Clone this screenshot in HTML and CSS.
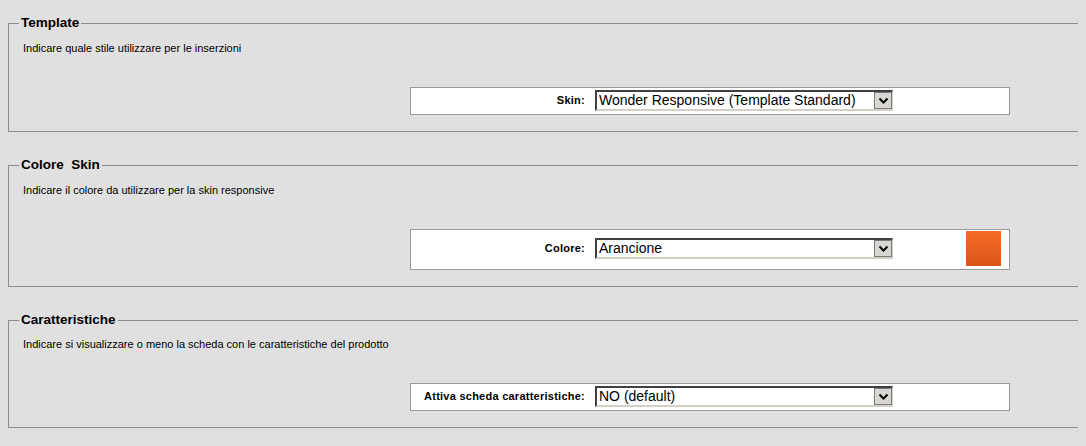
FILE: index.html
```html
<!DOCTYPE html>
<html lang="it">
<head>
<meta charset="utf-8">
<title>Impostazioni</title>
<link rel="stylesheet" href="styles.css">
</head>
<body>
<fieldset class="section">
  <legend class="section-title">Template</legend>
  <p class="section-desc">Indicare quale stile utilizzare per le inserzioni</p>
  <div class="field-box">
    <label class="field-label">Skin:</label>
    <span class="select-wrap">
      <select class="field-select"><option>Wonder Responsive (Template Standard)</option></select>
      <span class="select-arrow"><svg width="15" height="15" viewBox="0 0 15 15"><polyline points="3.5,5.5 7.5,9.5 11.5,5.5" fill="none" stroke="#000" stroke-width="2"/></svg></span>
    </span>
    <span class="field-extra"></span>
  </div>
</fieldset>

<fieldset class="section">
  <legend class="section-title">Colore&nbsp; Skin</legend>
  <p class="section-desc">Indicare il colore da utilizzare per la skin responsive</p>
  <div class="field-box field-box-tall">
    <label class="field-label">Colore:</label>
    <span class="select-wrap">
      <select class="field-select"><option>Arancione</option></select>
      <span class="select-arrow"><svg width="15" height="15" viewBox="0 0 15 15"><polyline points="3.5,5.5 7.5,9.5 11.5,5.5" fill="none" stroke="#000" stroke-width="2"/></svg></span>
    </span>
    <span class="field-extra"><span class="swatch"></span></span>
  </div>
</fieldset>

<fieldset class="section section-compact">
  <legend class="section-title">Caratteristiche</legend>
  <p class="section-desc">Indicare si visualizzare o meno la scheda con le caratteristiche del prodotto</p>
  <div class="field-box">
    <label class="field-label">Attiva scheda caratteristiche:</label>
    <span class="select-wrap">
      <select class="field-select"><option>NO (default)</option></select>
      <span class="select-arrow"><svg width="15" height="15" viewBox="0 0 15 15"><polyline points="3.5,5.5 7.5,9.5 11.5,5.5" fill="none" stroke="#000" stroke-width="2"/></svg></span>
    </span>
    <span class="field-extra"></span>
  </div>
</fieldset>
</body>
</html>
```

FILE: styles.css
```css
html {
  overflow: hidden;
}

body {
  margin: 8px;
  background: #e0e0e0;
  font-family: "Liberation Sans", Arial, sans-serif;
  color: #000;
}

.section {
  margin: 7px -10px 0 0;
  padding: 0 0 16px 10px;
  border: 1px solid #8c8c8c;
  min-width: 0;
}

.section + .section {
  margin-top: 25px;
}

.section-title {
  padding: 0 2px;
  font-weight: bold;
  font-size: 13.5px;
  line-height: 16px;
}

.section-desc {
  margin: 11px 0 0 4px;
  font-size: 11px;
  line-height: 13px;
}

.section-compact .section-desc {
  margin-top: 10px;
}

.field-box {
  box-sizing: border-box;
  width: 600px;
  margin: 32px 0 0 391px;
  padding: 2px 0 3px;
  border: 1px solid #9a9a9a;
  background: #fff;
  display: grid;
  grid-template-columns: 184px 298px 1fr;
  align-items: center;
}

.field-box-tall {
  padding: 1px 0 3px;
}

.field-label {
  text-align: right;
  padding-right: 10px;
  font-weight: bold;
  font-size: 11px;
  line-height: 13px;
  letter-spacing: 0.25px;
}

.select-wrap {
  position: relative;
  display: block;
  width: 298px;
  height: 21px;
}

.field-select {
  appearance: none;
  -webkit-appearance: none;
  box-sizing: border-box;
  display: block;
  width: 298px;
  height: 21px;
  margin: 0;
  padding: 0 20px 0 2px;
  border-radius: 0;
  border-top: 2px solid #404040;
  border-left: 2px solid #404040;
  border-right: 1px solid #d4d0c8;
  border-bottom: 2px solid #d4d0c8;
  background: #fff;
  color: #000;
  font-family: "Liberation Sans", Arial, sans-serif;
  font-size: 14px;
  line-height: 17px;
  outline: none;
}

.select-arrow {
  position: absolute;
  top: 2px;
  right: 1px;
  box-sizing: border-box;
  width: 18px;
  height: 17px;
  background: #d8d6d2;
  border: 1px solid #7a7a7a;
  display: flex;
  align-items: center;
  justify-content: center;
  pointer-events: none;
}

.field-extra {
  display: flex;
  justify-content: flex-end;
  padding-right: 8px;
}

.swatch {
  display: block;
  width: 35px;
  height: 35px;
  background: linear-gradient(#f56b25, #d9561b);
}
```
